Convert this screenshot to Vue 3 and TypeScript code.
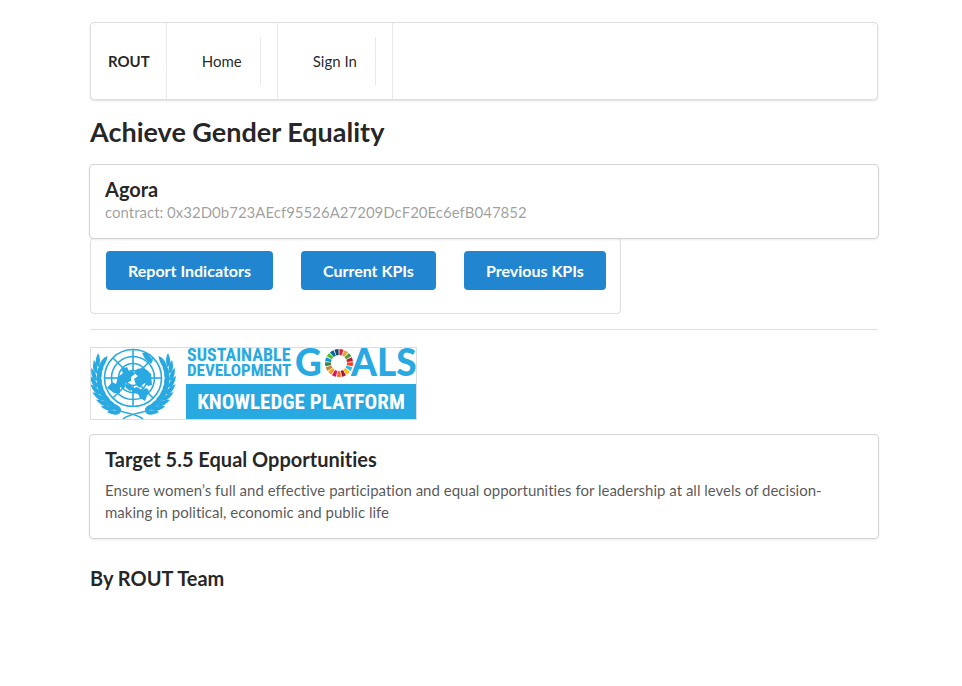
<script setup lang="ts">
interface NavLink {
  label: string
  href: string
}

const links: NavLink[] = [
  { label: 'Home', href: '#home' },
  { label: 'Sign In', href: '#sign-in' },
]

const actions: string[] = ['Report Indicators', 'Current KPIs', 'Previous KPIs']

const goalColors: string[] = [
  '#e5243b', '#dda63a', '#4c9f38', '#c5192d', '#ff3a21', '#26bde2',
  '#fcc30b', '#a21942', '#fd6925', '#dd1367', '#fd9d24', '#bf8b2e',
  '#3f7e44', '#0a97d9', '#56c02b', '#00689d', '#19486a',
]

function point(radius: number, degrees: number): string {
  const a = (degrees * Math.PI) / 180
  return `${(radius * Math.sin(a)).toFixed(2)} ${(-radius * Math.cos(a)).toFixed(2)}`
}

// One ring segment of the goals wheel, centred on the origin.
const segments = goalColors.map((color, i) => {
  const step = 360 / goalColors.length
  const from = i * step + 2
  const to = (i + 1) * step - 2
  return {
    color,
    d: `M${point(8, from)}L${point(14, from)}A14 14 0 0 1 ${point(14, to)}L${point(8, to)}A8 8 0 0 0 ${point(8, from)}Z`,
  }
})

// Leaves of the left laurel branch, from the foot up to the tip.
const leaves = Array.from({ length: 9 }, (_, i) => {
  const degrees = 200 + i * 11
  const a = (degrees * Math.PI) / 180
  return {
    x: Math.round(36 * Math.sin(a) * 100) / 100,
    y: Math.round(-36 * Math.cos(a) * 100) / 100,
    turn: degrees + 90,
  }
})
const meridians = [0, 45, 90, 135, 180, 225, 270, 315]
</script>

<template>
  <div class="page">
    <nav class="menu" aria-label="Main">
      <div class="cell brand">ROUT</div>
      <div v-for="link in links" :key="link.label" class="cell">
        <a class="link" :href="link.href">{{ link.label }}</a>
      </div>
    </nav>

    <h1 class="title">Achieve Gender Equality</h1>

    <section class="card">
      <h2 class="heading">Agora</h2>
      <p class="meta">contract: 0x32D0b723AEcf95526A27209DcF20Ec6efB047852</p>
    </section>

    <div class="actions">
      <button v-for="action in actions" :key="action" type="button" class="button">{{ action }}</button>
    </div>

    <hr class="divider" />

    <svg class="logo" width="327" height="73" viewBox="0 0 327 73" role="img" aria-label="Sustainable Development Goals Knowledge Platform">
      <g transform="translate(43 31)" fill="none" stroke="#28a9e2">
        <g stroke-width="1.6">
          <circle r="28.5" />
          <circle r="21.5" />
          <circle r="14.5" />
          <circle r="7.5" />
          <path v-for="m in meridians" :key="m" d="M0 -28V-7" :transform="`rotate(${m})`" />
        </g>
        <g fill="#28a9e2" stroke="none">
          <path d="M-26 10L-21 4L-17 6L-15 -1L-10 -5L-12 -9L-6 -11L-4 -7L0 -7L2 -4L-2 -1L-2 3L-7 5L-9 9L-13 9L-13 15L-19 15L-23 12Z" />
          <path d="M1 -5L4 -9L9 -10L14 -8L18 -4L19 7L15 8L12 5L9 7L7 10L3 7L1 1L5 -2Z" />
          <path d="M-2 11L4 9L9 12L14 10L16 13L14 18L12 23L7 20L5 16L0 15Z" />
          <path d="M9 -25L13 -26L20 -18L18 -14L12 -19Z" />
          <path d="M-7 6L-2 7L0 11L-3 13L-7 10Z" />
        </g>
        <g v-for="side in [1, -1]" :key="side" :transform="`scale(${side} 1)`">
          <path d="M10 41C2 34 -15 36 -25 27C-34 18 -38 4 -34 -10" stroke-width="1.6" />
          <g v-for="leaf in leaves" :key="leaf.turn" :transform="`translate(${leaf.x} ${leaf.y}) rotate(${leaf.turn})`" fill="#28a9e2" stroke="none">
            <path d="M0 0C0 -4 5 -6 13 -5C10 -2 7 0 0 0Z" transform="rotate(-90)" />
            <path d="M0 0C0 5 5 6 13 5C10 1 6 0 0 0Z" transform="rotate(-90)" />
          </g>
        </g>
      </g>
      <g fill="#28a9e2">
        <text x="97" y="14" font-size="18" class="narrow">SUSTAINABLE</text>
        <text x="97" y="29" font-size="17" class="narrow">DEVELOPMENT</text>
        <text x="205" y="29" font-size="37" class="heavy">G</text>
        <text x="261" y="29" font-size="37" class="heavy">ALS</text>
      </g>
      <g transform="translate(249 16)">
        <path v-for="segment in segments" :key="segment.color" :d="segment.d" :fill="segment.color" />
      </g>
      <rect x="96" y="37" width="231" height="36" fill="#28a9e2" />
      <text x="211" y="62" font-size="21" text-anchor="middle" fill="#ffffff" class="narrow">KNOWLEDGE PLATFORM</text>
    </svg>

    <section class="card">
      <h2 class="heading">Target 5.5 Equal Opportunities</h2>
      <p class="description">
        Ensure women’s full and effective participation and equal opportunities for leadership at all levels of
        decision-making in political, economic and public life
      </p>
    </section>

    <footer>
      <h3 class="heading">By ROUT Team</h3>
    </footer>
  </div>
</template>

<style>
body {
  background: #ffffff;
}
</style>

<style scoped>
.page {
  box-sizing: border-box;
  padding: 22px 84px 22px 90px;
  display: flex;
  flex-direction: column;
  color: rgba(0, 0, 0, 0.87);
  font-family: Lato, "Liberation Sans", sans-serif;
  font-size: 15px;
  font-variant-ligatures: no-common-ligatures;
  line-height: 20px;
}

.menu {
  display: flex;
  border: 1px solid rgba(34, 36, 38, 0.15);
  border-radius: 4px;
  box-shadow: 0 1px 2px 0 rgba(34, 36, 38, 0.15);
}

.cell {
  display: flex;
  align-items: center;
  padding: 14px 16px 14px 17px;
  border-right: 1px solid rgba(34, 36, 38, 0.1);
}

.brand {
  font-weight: 700;
}

.link {
  padding: 14px 18px;
  border-right: 1px solid rgba(34, 36, 38, 0.1);
  color: inherit;
  text-decoration: none;
}

.title {
  margin: 15px 0 17px;
  font-size: 27px;
  font-weight: 700;
  line-height: 33px;
}

.card {
  position: relative;
  padding: 12px 15px 15px;
  border-radius: 4px;
  background: #ffffff;
  box-shadow: 0 1px 3px 0 #d4d4d5, 0 0 0 1px #d4d4d5;
}

.heading {
  margin: 0;
  font-size: 20px;
  font-weight: 700;
  line-height: 24px;
}

.meta {
  margin: 0;
  color: rgba(0, 0, 0, 0.4);
  line-height: 22px;
}

.description {
  margin: 8px 0 0;
  color: rgba(0, 0, 0, 0.68);
  line-height: 22px;
}

.actions {
  display: flex;
  align-self: flex-start;
  gap: 28px;
  padding: 12px 14px 23px 15px;
  border: 1px solid rgba(34, 36, 38, 0.15);
  border-radius: 4px;
}

.button {
  padding: 10px 22px;
  border: 0;
  border-radius: 4px;
  background: #2185d0;
  color: #ffffff;
  font: inherit;
  font-size: 16px;
  font-weight: 700;
  line-height: 19px;
  cursor: pointer;
}

.divider {
  width: 100%;
  margin: 15px 0 17px;
  border: 0;
  border-top: 1px solid rgba(34, 36, 38, 0.15);
}

.logo {
  box-sizing: border-box;
  margin-bottom: 15px;
  overflow: visible;
  outline: 1px solid #dddddd;
  outline-offset: -1px;
}

.heavy {
  font-weight: 900;
}

.narrow {
  font-family: "Liberation Sans Narrow", "Roboto Condensed", "Open Sans Condensed", Roboto, sans-serif;
  font-weight: 700;
}

footer {
  margin-top: 28px;
}
</style>
